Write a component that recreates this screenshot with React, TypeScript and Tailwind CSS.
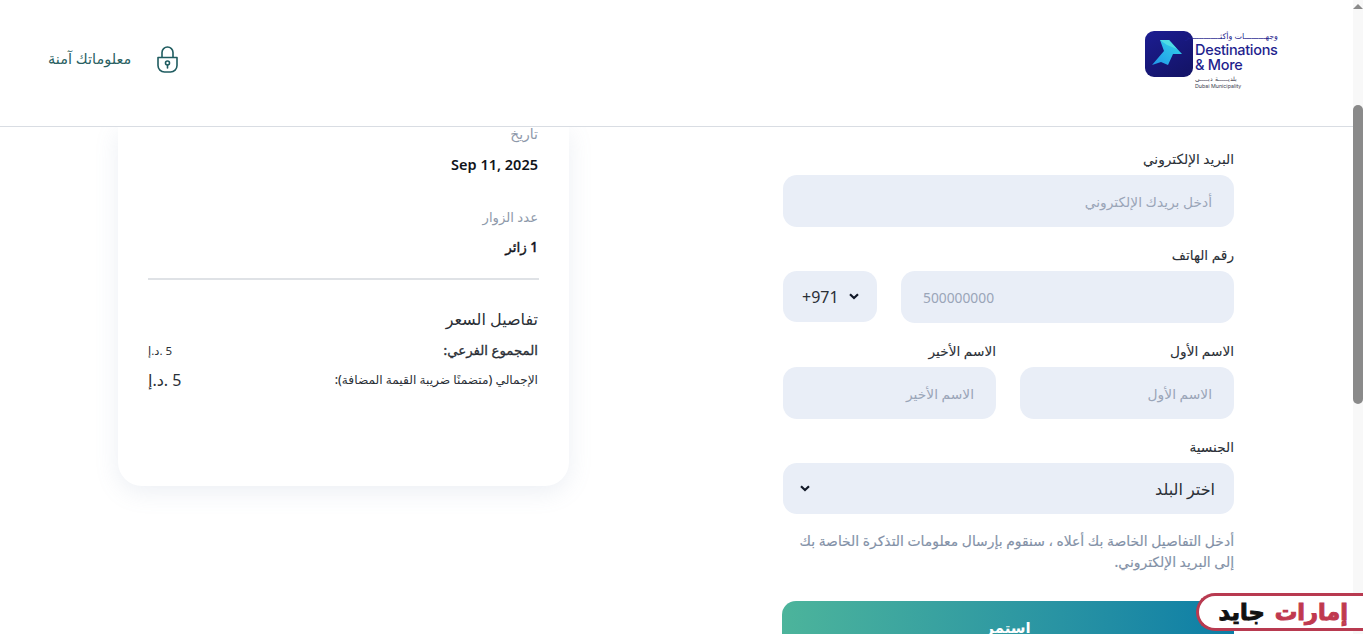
import React from 'react';

const FONT = "font-['Noto_Sans','Open_Sans','DejaVu_Sans',sans-serif]";

const inputClass =
  "w-full h-[52px] rounded-[14px] bg-[#e9eef7] px-[22px] text-[13.8px] text-[#2a2f36] outline-none placeholder:text-[#9aa5b8]";

const Label: React.FC<{ children: React.ReactNode }> = ({ children }) => (
  <label className="block h-5 mb-[5px] text-[13.7px] leading-[18px] font-medium text-[#2a2f36] [-webkit-text-stroke:0.1px_currentColor]">{children}</label>
);

const Chevron: React.FC<{ className: string }> = ({ className }) => (
  <svg width="10" height="7" viewBox="0 0 10 7" fill="none" stroke="#111827" strokeWidth="2.2" className={className}>
    <path d="M1 1.2 L5 5 L9 1.2" />
  </svg>
);

const Logo = () => (
  <div className="self-start mt-[31px] flex items-start gap-[2px]" dir="ltr">
    <svg width="48" height="46" viewBox="0 0 48 46" className="shrink-0">
      <defs>
        <linearGradient id="tile" x1="0" y1="0" x2="0.6" y2="1">
          <stop offset="0" stopColor="#1c1d92" />
          <stop offset="1" stopColor="#14146a" />
        </linearGradient>
        <linearGradient id="arrow" x1="0" y1="1" x2="1" y2="0">
          <stop offset="0" stopColor="#1f96ea" />
          <stop offset="1" stopColor="#35d6e6" />
        </linearGradient>
      </defs>
      <rect width="48" height="46" rx="9" fill="url(#tile)" />
      <path d="M15 9 L24 9 L37 23 L28 23 L23 34 L16 31 L7 34 L19 20 Z" fill="url(#arrow)" />
      <path d="M15 9 L24 9 L32 18 L22 14 Z" fill="#4fdde4" />
    </svg>
    <div className="w-[83px] flex flex-col text-[#1f1f8e] font-['Inter',sans-serif]">
      <span className="h-[10px] whitespace-nowrap text-[8px] leading-[10px] font-medium text-right font-['Noto_Sans','DejaVu_Sans',sans-serif]" dir="rtl">وجهـــــــــات وأكثـــــــــــــر</span>
      <span className="mt-[1px] text-[14.5px] leading-[15px] font-medium tracking-[-0.3px]">Destinations</span>
      <span className="text-[14.5px] leading-[15px] font-medium tracking-[-0.3px]">&amp; More</span>
      <span className="mt-[4px] text-[5.5px] leading-[7px] text-[#3c4150]">بلديـــــة دبــــي</span>
      <span className="text-[5.3px] leading-[7px] text-[#3c4150]">Dubai Municipality</span>
    </div>
  </div>
);

const LockIcon = () => (
  <svg width="21" height="27" viewBox="0 0 21 27" fill="none" stroke="#1f5c60" strokeWidth="1.6" strokeLinecap="round" strokeLinejoin="round">
    <path d="M5 11 V6.5 a5.5 5.5 0 0 1 11 0 V11" />
    <path d="M1 11.5 h19 v8 a6.5 6.5 0 0 1 -6.5 6.5 h-6 a6.5 6.5 0 0 1 -6.5 -6.5 Z" />
    <circle cx="10.5" cy="17" r="2" />
    <path d="M10.5 19 V22" />
  </svg>
);

const Scrollbar = () => (
  <div className="w-[10px] shrink-0 bg-[#f8f8f8] flex flex-col items-center">
    <div className="mt-[4px] w-0 h-0 border-x-[5px] border-x-transparent border-b-[5px] border-b-[#8a8a8a]" />
    <div className="mt-[96px] w-[10px] h-[299px] rounded-[5px] bg-[#8a8a8a]" />
  </div>
);

export default function App() {
  return (
    <div className={`relative h-screen flex overflow-hidden bg-white ${FONT}`}>
      <div className="flex-1 min-w-0 flex flex-col">
        {/* Header */}
        <header className="h-[127px] shrink-0 border-b border-[#d9dde3] flex items-center justify-between pl-[48px] pr-[75px]">
          <div className="flex items-center gap-[26px] mb-[8px]">
            <span dir="rtl" className="text-[14.5px] font-medium text-[#2a5f62]">معلوماتك آمنة</span>
            <LockIcon />
          </div>
          <Logo />
        </header>

        {/* Body, scrolled partway down */}
        <main dir="rtl" className="flex-1 min-h-0 overflow-hidden flex justify-between pr-[119px] pl-[118px]">
          <div className="w-[451px] pt-[23px]">
            <Label>البريد الإلكتروني</Label>
            <input className={`${inputClass} mb-[19px]`} placeholder="أدخل بريدك الإلكتروني" />

            <Label>رقم الهاتف</Label>
            <div className="flex justify-between mb-[19px]">
              <input className={`${inputClass} w-[333px]! text-left`} dir="ltr" placeholder="500000000" />
              <div className="relative w-[94px]">
                <select dir="ltr" className="appearance-none w-full h-[51px] rounded-[14px] bg-[#e9eef7] pl-[19px] pr-[30px] text-[16px] text-[#2a2f36] outline-none">
                  <option>+971</option>
                </select>
                <Chevron className="absolute left-[66px] top-[22px]" />
              </div>
            </div>

            <div className="flex justify-between mb-[19px]">
              <div className="w-[214px]">
                <Label>الاسم الأول</Label>
                <input className={inputClass} placeholder="الاسم الأول" />
              </div>
              <div className="w-[213px]">
                <Label>الاسم الأخير</Label>
                <input className={inputClass} placeholder="الاسم الأخير" />
              </div>
            </div>

            <Label>الجنسية</Label>
            <div className="relative mb-[16px]">
              <select className="appearance-none w-full h-[51px] rounded-[14px] bg-[#e9eef7] pr-[19px] pl-[40px] text-[16px] text-[#2a2f36] outline-none">
                <option>اختر البلد</option>
              </select>
              <Chevron className="absolute left-[17px] top-[22px]" />
            </div>

            <p className="text-[13.9px] leading-[21px] text-[#8391a7] font-medium mb-[29px] [-webkit-text-stroke:0.15px_currentColor]">
              أدخل التفاصيل الخاصة بك أعلاه ، سنقوم بإرسال معلومات التذكرة الخاصة بك إلى البريد الإلكتروني.
            </p>

            <button className="w-[452px] h-[52px] rounded-[14px] bg-gradient-to-l from-[#0b7ea6] to-[#4cb49b] text-white text-[15px] font-semibold">
              استمر
            </button>
          </div>

          {/* Summary card, its top is scrolled under the header */}
          <div className="w-[451px] h-[359px] shrink-0 rounded-b-[24px] bg-white shadow-[0_6px_24px_rgba(120,140,180,0.14)] px-[30px]">
            <div className="h-[14px] text-[14px] leading-[14px] text-[#8e99aa] pr-[1px]">تاريخ</div>
            <div dir="ltr" className="mt-[13px] pr-[1px] text-right text-[14.5px] leading-5 font-semibold text-[#10141a]">Sep 11, 2025</div>
            <div className="mt-[33px] pr-[1px] text-[13.2px] leading-5 text-[#8e99aa]">عدد الزوار</div>
            <div className="mt-[10px] pr-[1px] text-[13.5px] leading-5 font-medium text-[#10141a] [-webkit-text-stroke:0.4px_currentColor]">1 زائر</div>
            <div className="mt-[21px] h-[2px] bg-[#dfe2e6]" />
            <div className="mt-[27px] pr-[1px] text-[16px] leading-6 font-medium text-[#2a2f36]">تفاصيل السعر</div>
            <div className="mt-[10px] pr-[1px] flex justify-between items-center h-5 text-[#2a2f36]">
              <span className="text-[13.3px] font-medium [-webkit-text-stroke:0.3px_currentColor]">المجموع الفرعي:</span>
              <span className="text-[11.5px] whitespace-nowrap">5 .د.إ</span>
            </div>
            <div className="mt-[9px] pr-[1px] flex justify-between items-center h-5 text-[#2a2f36]">
              <span className="text-[12.2px] font-medium">الإجمالي (متضمنًا ضريبة القيمة المضافة):</span>
              <span className="text-[16px] whitespace-nowrap">5 .د.إ</span>
            </div>
          </div>
        </main>
      </div>

      <Scrollbar />

      {/* Floating site badge */}
      <div dir="rtl" className="absolute right-0 top-[593px] w-[167px] h-[38px] rounded-l-[19px] border-[3px] border-r-0 border-[#b83a50] bg-white flex items-center pr-[15px] gap-[10px] text-[22.5px] leading-none font-black [-webkit-text-stroke:1px_currentColor]">
        <span className="text-[#c0394f]">إمارات</span>
        <span className="text-[#111111]">جايد</span>
      </div>
    </div>
  );
}
